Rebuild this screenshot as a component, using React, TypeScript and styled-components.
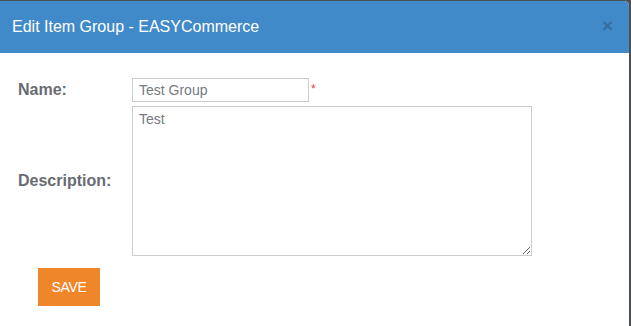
import React from 'react'
import styled, { createGlobalStyle } from 'styled-components'

const GlobalStyle = createGlobalStyle`
  html, body {
    margin: 0;
    padding: 0;
    background: #4f5052;
    font-family: 'Liberation Sans', Arial, sans-serif;
  }
`

const Backdrop = styled.div`
  padding-top: 1px;
  width: 631px;
  height: 326px;
  overflow: hidden;
  box-sizing: border-box;
`

const Modal = styled.div`
  width: 629px;
  height: 340px;
  background: #fff;
  border-top-right-radius: 5px;
  overflow: hidden;
`

const Header = styled.div`
  display: flex;
  align-items: center;
  justify-content: space-between;
  height: 52px;
  padding: 0 16px 0 12px;
  background: #418ac9;
  box-sizing: border-box;
`

const Title = styled.h4`
  margin: 0;
  font-size: 16px;
  font-weight: normal;
  color: #fff;
`

const Close = styled.button`
  border: 0;
  background: none;
  padding: 0;
  font-family: 'Liberation Sans', Arial, sans-serif;
  font-size: 19px;
  font-weight: bold;
  line-height: 1;
  color: #000;
  opacity: 0.2;
  margin-top: -3px;
`

const Body = styled.div`
  padding: 25px 0 0 18px;
`

const Form = styled.div`
  display: grid;
  grid-template-columns: 114px auto;
  row-gap: 4px;
  align-items: center;
`

const Label = styled.label`
  font-size: 16px;
  font-weight: bold;
  color: #686c72;
`

const Field = styled.div`
  display: flex;
  align-items: flex-start;
`

const TextInput = styled.input`
  width: 177px;
  height: 24px;
  box-sizing: border-box;
  border: 1px solid #cccccc;
  padding: 0 6px;
  font-family: 'Liberation Sans', Arial, sans-serif;
  font-size: 14px;
  color: #777a7f;
  outline: none;
`

const Required = styled.span`
  color: #e8404a;
  font-size: 12px;
  line-height: 1;
  margin: 5px 0 0 2px;
`

const TextArea = styled.textarea`
  display: block;
  width: 400px;
  height: 150px;
  box-sizing: border-box;
  border: 1px solid #cccccc;
  padding: 4px 6px;
  font-family: 'Liberation Sans', Arial, sans-serif;
  font-size: 14px;
  color: #777a7f;
  outline: none;
  resize: both;
`

const Footer = styled.div`
  padding: 12px 0 0 20px;
`

const SaveButton = styled.button`
  width: 62px;
  height: 38px;
  border: 0;
  background: #f0862a;
  color: #fff;
  font-family: 'Liberation Sans', Arial, sans-serif;
  font-size: 14px;
  letter-spacing: -0.3px;
  padding: 0;
`

const App = () => {
  return (
    <>
      <GlobalStyle />
      <Backdrop>
        <Modal>
          <Header>
            <Title>Edit Item Group - EASYCommerce</Title>
            <Close aria-label="Close">×</Close>
          </Header>
          <Body>
            <Form>
              <Label htmlFor="name">Name:</Label>
              <Field>
                <TextInput id="name" defaultValue="Test Group" />
                <Required>*</Required>
              </Field>
              <Label htmlFor="description">Description:</Label>
              <Field>
                <TextArea id="description" defaultValue="Test" />
              </Field>
            </Form>
            <Footer>
              <SaveButton>SAVE</SaveButton>
            </Footer>
          </Body>
        </Modal>
      </Backdrop>
    </>
  )
}

export default App
